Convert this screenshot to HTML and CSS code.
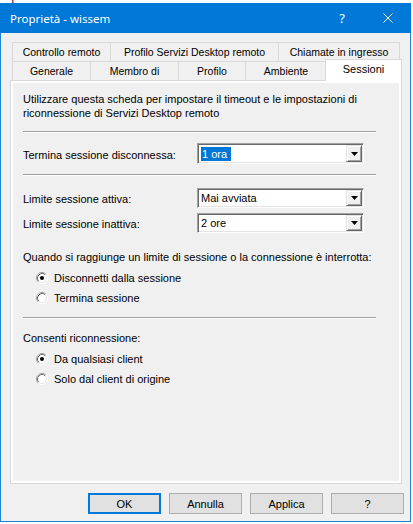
FILE: index.html
```html
<!DOCTYPE html>
<html lang="it">
<head>
<meta charset="utf-8">
<title>Proprietà - wissem</title>
<link rel="stylesheet" href="styles.css">
</head>
<body>
<div class="desk">
  <span class="d1">mpleto</span>
  <span class="d2">Descrizione</span>
  <span class="d3">Azioni</span>
</div>
<div class="window">
  <div class="titlebar">
    <span class="title">Proprietà - wissem</span>
    <span class="cap-btn">?</span>
    <span class="cap-btn">
      <svg width="10" height="10" viewBox="0 0 10 10"><path d="M0.5 0.5L9.5 9.5M9.5 0.5L0.5 9.5" stroke="#fff" stroke-width="1" fill="none"/></svg>
    </span>
  </div>
  <div class="client">
    <div class="tabs">
      <div class="tabrow">
        <div class="tab t-ctrl">Controllo remoto</div>
        <div class="tab t-prof">Profilo Servizi Desktop remoto</div>
        <div class="tab t-call">Chiamate in ingresso</div>
      </div>
      <div class="tabrow">
        <div class="tab t-gen">Generale</div>
        <div class="tab t-mem">Membro di</div>
        <div class="tab t-pro">Profilo</div>
        <div class="tab t-amb">Ambiente</div>
        <div class="tab t-ses sel">Sessioni</div>
      </div>
    </div>
    <div class="pane">
      <p class="intro">Utilizzare questa scheda per impostare il timeout e le impostazioni di<br>riconnessione di Servizi Desktop remoto</p>
      <div class="sep s1"></div>
      <div class="row r-term">
        <span class="label">Termina sessione disconnessa:</span>
        <div class="combo h21">
          <span class="combo-text"><span class="hl">1 ora</span></span>
          <span class="combo-btn"><svg width="7" height="4" viewBox="0 0 7 4"><path d="M0 0H7L3.5 4Z" fill="#000"/></svg></span>
        </div>
      </div>
      <div class="sep s2"></div>
      <div class="row r-att">
        <span class="label">Limite sessione attiva:</span>
        <div class="combo">
          <span class="combo-text">Mai avviata</span>
          <span class="combo-btn"><svg width="7" height="4" viewBox="0 0 7 4"><path d="M0 0H7L3.5 4Z" fill="#000"/></svg></span>
        </div>
      </div>
      <div class="row r-ina">
        <span class="label">Limite sessione inattiva:</span>
        <div class="combo">
          <span class="combo-text">2 ore</span>
          <span class="combo-btn"><svg width="7" height="4" viewBox="0 0 7 4"><path d="M0 0H7L3.5 4Z" fill="#000"/></svg></span>
        </div>
      </div>
      <p class="text t-quando">Quando si raggiunge un limite di sessione o la connessione è interrotta:</p>
      <div class="radio first">
        <svg class="rb" width="12" height="12" viewBox="0 0 12 12">
          <circle cx="6" cy="6" r="5" fill="#fff"/>
          <path d="M9.89 2.11A5.5 5.5 0 0 0 2.11 9.89" stroke="#a0a0a0" fill="none"/>
          <path d="M9.89 2.11A5.5 5.5 0 0 1 2.11 9.89" stroke="#ffffff" fill="none"/>
          <path d="M9.18 2.82A4.5 4.5 0 0 0 2.82 9.18" stroke="#696969" fill="none"/>
          <path d="M9.18 2.82A4.5 4.5 0 0 1 2.82 9.18" stroke="#e3e3e3" fill="none"/>
          <circle cx="6" cy="6" r="2" fill="#000"/>
        </svg>
        <span>Disconnetti dalla sessione</span>
      </div>
      <div class="radio">
        <svg class="rb" width="12" height="12" viewBox="0 0 12 12">
          <circle cx="6" cy="6" r="5" fill="#fff"/>
          <path d="M9.89 2.11A5.5 5.5 0 0 0 2.11 9.89" stroke="#a0a0a0" fill="none"/>
          <path d="M9.89 2.11A5.5 5.5 0 0 1 2.11 9.89" stroke="#ffffff" fill="none"/>
          <path d="M9.18 2.82A4.5 4.5 0 0 0 2.82 9.18" stroke="#696969" fill="none"/>
          <path d="M9.18 2.82A4.5 4.5 0 0 1 2.82 9.18" stroke="#e3e3e3" fill="none"/>
        </svg>
        <span>Termina sessione</span>
      </div>
      <div class="sep s3"></div>
      <p class="text t-consenti">Consenti riconnessione:</p>
      <div class="radio first">
        <svg class="rb" width="12" height="12" viewBox="0 0 12 12">
          <circle cx="6" cy="6" r="5" fill="#fff"/>
          <path d="M9.89 2.11A5.5 5.5 0 0 0 2.11 9.89" stroke="#a0a0a0" fill="none"/>
          <path d="M9.89 2.11A5.5 5.5 0 0 1 2.11 9.89" stroke="#ffffff" fill="none"/>
          <path d="M9.18 2.82A4.5 4.5 0 0 0 2.82 9.18" stroke="#696969" fill="none"/>
          <path d="M9.18 2.82A4.5 4.5 0 0 1 2.82 9.18" stroke="#e3e3e3" fill="none"/>
          <circle cx="6" cy="6" r="2" fill="#000"/>
        </svg>
        <span>Da qualsiasi client</span>
      </div>
      <div class="radio">
        <svg class="rb" width="12" height="12" viewBox="0 0 12 12">
          <circle cx="6" cy="6" r="5" fill="#fff"/>
          <path d="M9.89 2.11A5.5 5.5 0 0 0 2.11 9.89" stroke="#a0a0a0" fill="none"/>
          <path d="M9.89 2.11A5.5 5.5 0 0 1 2.11 9.89" stroke="#ffffff" fill="none"/>
          <path d="M9.18 2.82A4.5 4.5 0 0 0 2.82 9.18" stroke="#696969" fill="none"/>
          <path d="M9.18 2.82A4.5 4.5 0 0 1 2.82 9.18" stroke="#e3e3e3" fill="none"/>
        </svg>
        <span>Solo dal client di origine</span>
      </div>
    </div>
    <div class="buttons">
      <button class="btn default">OK</button>
      <button class="btn">Annulla</button>
      <button class="btn">Applica</button>
      <button class="btn">?</button>
    </div>
  </div>
</div>
</body>
</html>
```

FILE: styles.css
```css
* { box-sizing: border-box; }

body {
  margin: 0;
  width: 413px;
  height: 524px;
  overflow: hidden;
  background: #ffffff;
  font-family: "Liberation Sans", Arial, sans-serif;
  font-size: 11px;
  color: #000;
}

.desk {
  height: 3px;
  overflow: hidden;
  display: flex;
  font-family: "Noto Sans", sans-serif;
  font-size: 12px;
  line-height: 14px;
  color: #222;
}
.desk span { display: block; margin-top: -11px; }
.desk .d1 { width: 95px; }
.desk .d2 { width: 125px; }
.desk .d3 { font-weight: bold; }

.window {
  width: 411px;
  height: 519px;
  border: 1px solid #1c84d2;
  border-top: none;
  background: #f0f0f0;
  display: flex;
  flex-direction: column;
}

.titlebar {
  height: 30px;
  margin: 0 -1px;
  background: #0078d7;
  color: #fff;
  display: flex;
  align-items: center;
  font-family: "Noto Sans", sans-serif;
  font-size: 11.5px;
}
.title { flex: 1; padding-left: 10px; }
.cap-btn {
  width: 46px;
  height: 30px;
  display: flex;
  align-items: center;
  justify-content: center;
  font-size: 13px;
}

.client {
  flex: 1;
  padding: 9px 7px 0 9px;
  display: flex;
  flex-direction: column;
}

.tabs {
  margin: 0 2px;
  width: 388px;
  font-size: 10.5px;
}
.tabrow {
  display: flex;
  height: 19px;
}
.tab {
  height: 19px;
  border: 1px solid #d9d9d9;
  border-bottom: none;
  margin-right: -1px;
  background: #f0f0f0;
  text-align: center;
  line-height: 18px;
  white-space: nowrap;
}
.t-ctrl { width: 99px; }
.t-prof { width: 169px; }
.t-call { width: 122px; }
.t-gen { width: 79px; }
.t-mem { width: 89px; }
.t-pro { width: 68px; }
.t-amb { width: 82px; }
.t-ses { width: 74px; }
.tab.sel {
  position: relative;
  z-index: 2;
  background: #fff;
  height: 22px;
  margin-top: -2px;
  margin-left: -1px;
  margin-right: -2px;
  width: 77px;
  line-height: 19px;
  font-size: 11px;
}

.pane {
  width: 392px;
  height: 404px;
  border: 1px solid #d9d9d9;
  box-shadow: inset 0 0 0 2px #ffffff;
  background: #f0f0f0;
  padding: 11px 0 0 12px;
  display: flex;
  flex-direction: column;
  align-items: flex-start;
}

.intro, .text {
  margin: 0;
  line-height: 14px;
  white-space: nowrap;
}

.sep {
  width: 353px;
  height: 2px;
  border-top: 1px solid #a0a0a0;
  border-bottom: 1px solid #ffffff;
}
.s1 { margin-top: 11px; }
.s2 { margin-top: 10px; }
.s3 { margin-top: 9px; }

.row {
  display: flex;
  align-items: center;
}
.r-term { margin-top: 10px; }
.r-att { margin-top: 12px; }
.r-ina { margin-top: 5px; }
.label {
  width: 174px;
  padding-top: 2px;
}

.combo {
  width: 167px;
  height: 20px;
  background: #fff;
  border: 1px solid;
  border-color: #a0a0a0 #ffffff #ffffff #a0a0a0;
  box-shadow: inset 1px 1px 0 #696969, inset -1px -1px 0 #e3e3e3;
  display: flex;
  align-items: stretch;
  padding: 1px 1px 1px 2px;
}
.combo.h21 { height: 21px; }
.combo-text {
  flex: 1;
  display: flex;
  align-items: center;
  padding-left: 1px;
}
.hl {
  background: #0078d7;
  color: #fff;
  padding: 0 1px;
  width: 30px;
  line-height: 14px;
}
.combo-btn {
  width: 16px;
  background: #f0f0f0;
  border: 1px solid;
  border-color: #e3e3e3 #696969 #696969 #e3e3e3;
  box-shadow: inset 1px 1px 0 #ffffff, inset -1px -1px 0 #a0a0a0;
  display: flex;
  align-items: center;
  justify-content: center;
}

.t-quando { margin-top: 17px; }
.t-consenti { margin-top: 12px; }

.radio {
  height: 20px;
  display: flex;
  align-items: center;
  padding-left: 13px;
}
.radio.first { margin-top: 4px; }
.rb { margin-right: 6px; flex: none; }

.buttons {
  margin-top: 9px;
  display: flex;
  justify-content: flex-end;
  gap: 8px;
  margin-right: -1px;
}
.btn {
  width: 73px;
  height: 21px;
  background: #e1e1e1;
  border: 1px solid #adadad;
  font-family: "Liberation Sans", Arial, sans-serif;
  font-size: 11px;
  color: #000;
  padding: 0;
}
.btn.default {
  border: 2px solid #0078d7;
}
```
